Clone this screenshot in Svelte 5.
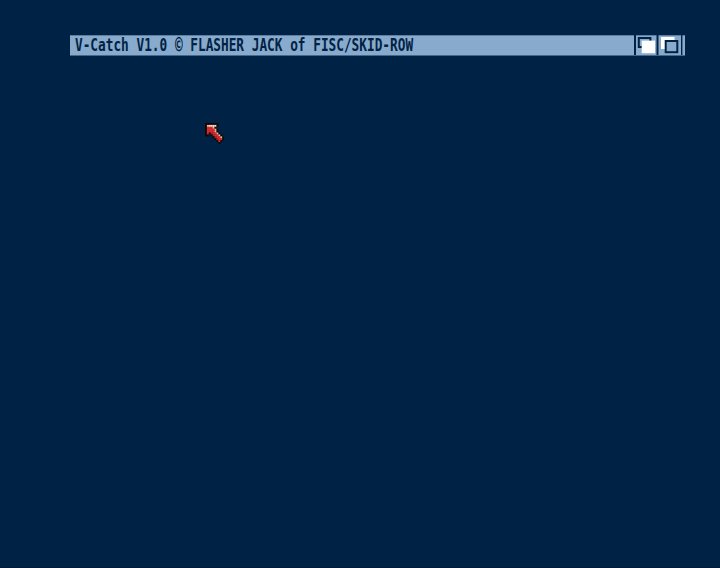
<script>
  const palette = { K: '#100808', C: '#f0b898', R: '#ec2c2c', D: '#c02020', W: '#ffe0c8' };
  const rows = [
    'KKKKKKK...',
    'KCWWWWK...',
    'KRRRCK....',
    'KRRRRCK...',
    'KRRRRCK...',
    'KRKDRRCK..',
    'KK.KDRRCK.',
    '....KDRRCK',
    '.....KDRRK',
    '......KRK.',
    '.......K..'
  ];
  const pixels = rows.flatMap((row, y) =>
    [...row].flatMap((c, x) => (c === '.' ? [] : [{ x, y, fill: palette[c] }]))
  );
</script>

<main class="screen">
  <header class="bar">
    <div class="title"><span class="text">V-Catch V1.0 <span class="copy">©</span> FLASHER JACK of FISC/SKID-ROW</span></div>
    <svg class="gadgets" width="51" height="20" viewBox="0 0 51 20">
      <path fill="#002244" d="M0 0h2v20H0zM22.5 0h2v20h-2zM47 0h1.4v20H47z" />
      <rect x="4.8" y="3" width="11.6" height="9" fill="#88aacc" stroke="#002244" stroke-width="2" />
      <rect x="7.7" y="5.6" width="13.4" height="12.6" fill="#fff" />
      <rect x="27" y="2" width="13.5" height="12" fill="#fff" />
      <rect x="31.7" y="6" width="11.6" height="11.2" fill="#88aacc" stroke="#002244" stroke-width="2" />
    </svg>
  </header>
  <svg class="pointer" width="19.2" height="21" viewBox="0 0 10 11" preserveAspectRatio="none">
    {#each pixels as p}
      <rect x={p.x} y={p.y} width="1.04" height="1.04" fill={p.fill} />
    {/each}
  </svg>
</main>

<style>
  :global(body) {
    margin: 0;
    background: #002244;
  }
  .screen {
    position: relative;
    box-sizing: border-box;
    width: 720px;
    height: 568px;
    padding: 35px 35px 0 70px;
    background: #002244;
    overflow: hidden;
    border-bottom: 1px solid #001a36;
  }
  .bar {
    display: flex;
    justify-content: space-between;
    height: 20px;
    background: #88aacc;
    box-shadow: inset 0 1px #5c7fa3;
    border-bottom: 1px solid #456789;
  }
  .title {
    width: 345px;
    padding-left: 5px;
    white-space: pre;
    color: #002244;
    font: bold 18px/20px 'DejaVu Sans Mono', monospace;
  }
  .text {
    display: inline-block;
    transform: scaleX(0.709);
    transform-origin: 0 0;
  }
  .copy {
    display: inline-block;
    transform: scaleY(1.3);
  }
  .gadgets {
    display: block;
    flex: none;
  }
  .pointer {
    position: absolute;
    left: 205px;
    top: 123px;
  }
</style>
